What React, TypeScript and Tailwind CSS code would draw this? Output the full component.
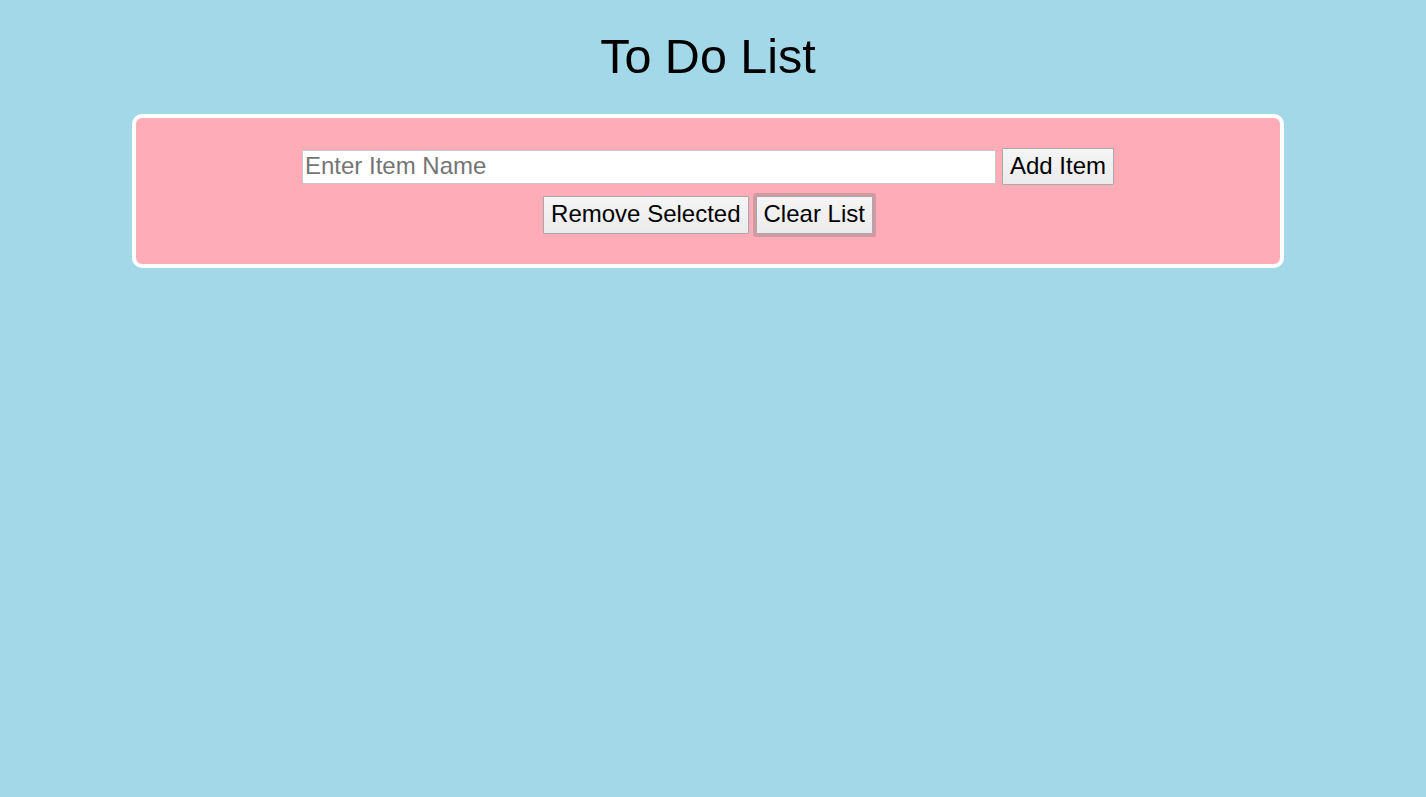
import React from "react";

export default function App() {
  return (
    <div
      className="min-h-[797px] w-full bg-[#a2d8e7] overflow-hidden"
      style={{ fontFamily: '"Liberation Sans", Arial, sans-serif' }}
    >
      <h1 className="mt-[29px] mb-[31px] text-center text-[48.5px] leading-[54px] font-normal text-black pl-[2px] pr-[12px]">
        To Do List
      </h1>
      <div className="ml-[132px] w-[1152px] h-[154px] rounded-[10px] border-4 border-white bg-[#ffacb9] pt-[30px] flex flex-col items-center">
        <div className="flex items-center h-[37px]">
          <input
            type="text"
            placeholder="Enter Item Name"
            className="w-[694px] h-[34px] bg-white border border-[#c8c8c8] px-[2px] pb-[2px] text-[24px] leading-[28px] text-black placeholder:text-[#757575] outline-none"
          />
          <button className="ml-[6px] h-[37px] px-[7px] pb-[2px] border border-[#a9a9a9] bg-gradient-to-b from-[#f5f5f5] to-[#ebebeb] text-[24px] leading-[28px] text-black rounded-[1px]">
            Add Item
          </button>
        </div>
        <div className="mt-[11px] flex items-center h-[38px]">
          <button className="h-[38px] px-[7px] pb-[2px] border border-[#a9a9a9] bg-gradient-to-b from-[#f5f5f5] to-[#ebebeb] text-[24px] leading-[28px] text-black rounded-[1px]">
            Remove Selected
          </button>
          <button className="ml-[7px] h-[38px] px-[7px] pb-[2px] border border-[#a9a9a9] bg-gradient-to-b from-[#f5f5f5] to-[#ebebeb] text-[24px] leading-[28px] text-black rounded-[1px] shadow-[0_0_0_3px_rgba(120,120,130,0.35)]">
            Clear List
          </button>
        </div>
      </div>
    </div>
  );
}
